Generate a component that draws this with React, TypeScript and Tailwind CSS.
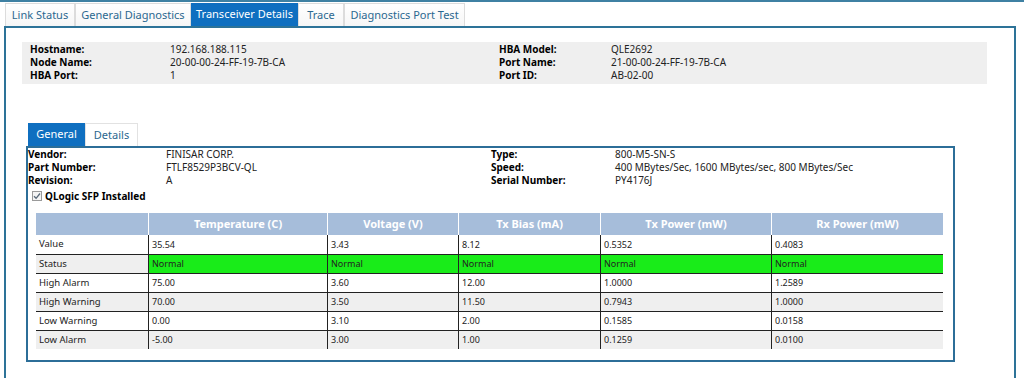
import React from "react";

const outerTabs = [
  { label: "Link Status", w: "w-[70px]", active: false },
  { label: "General Diagnostics", w: "w-[116px]", active: false },
  { label: "Transceiver Details", w: "w-[107px]", active: true },
  { label: "Trace", w: "w-[46px]", active: false },
  { label: "Diagnostics Port Test", w: "w-[121px]", active: false },
];

const cols = ["", "Temperature (C)", "Voltage (V)", "Tx Bias (mA)", "Tx Power (mW)", "Rx Power (mW)"];

const rows: string[][] = [
  ["Value", "35.54", "3.43", "8.12", "0.5352", "0.4083"],
  ["Status", "Normal", "Normal", "Normal", "Normal", "Normal"],
  ["High Alarm", "75.00", "3.60", "12.00", "1.0000", "1.2589"],
  ["High Warning", "70.00", "3.50", "11.50", "0.7943", "1.0000"],
  ["Low Warning", "0.00", "3.10", "2.00", "0.1585", "0.0158"],
  ["Low Alarm", "-5.00", "3.00", "1.00", "0.1259", "0.0100"],
];

const colW = ["w-[112px]", "w-[179px]", "w-[131px]", "w-[142px]", "w-[171px]", "w-[172px]"];

export default function App() {
  return (
    <div className="w-[1024px] h-[378px] overflow-hidden bg-white flex flex-col font-['Noto_Sans',sans-serif] text-black">
      <div className="h-[2px] bg-[#3f81a3] shrink-0" />
      <div className="flex h-[24px] pl-[5px] pt-[1px] shrink-0">
        {outerTabs.map((t) => (
          <div
            key={t.label}
            className={
              t.active
                ? `${t.w} h-[23px] flex items-center justify-center bg-[#0f6fc0] text-white text-[11px]`
                : `${t.w} h-[23px] flex items-center justify-center bg-gradient-to-b from-white to-[#f6f6f6] border-x border-t border-[#dcdcdc] text-[#2b6890] text-[11px]`
            }
          >
            {t.label}
          </div>
        ))}
      </div>
      <div className="ml-[4px] w-[1012px] flex-1 border-2 border-b-0 border-[#2d7398] pt-[14px] pl-[16px]">
        {/* Host info box */}
        <div className="w-[965px] h-[42px] bg-[#efefef] pt-[1px] pl-[8px] text-[10px] leading-[13px]">
          {[
            ["Hostname:", "192.168.188.115", "HBA Model:", "QLE2692"],
            ["Node Name:", "20-00-00-24-FF-19-7B-CA", "Port Name:", "21-00-00-24-FF-19-7B-CA"],
            ["HBA Port:", "1", "Port ID:", "AB-02-00"],
          ].map((r) => (
            <div key={r[0]} className="flex h-[13px]">
              <div className="w-[140px] font-bold">{r[0]}</div>
              <div className="w-[329px] text-[#222]">{r[1]}</div>
              <div className="w-[112px] font-bold">{r[2]}</div>
              <div className="text-[#222]">{r[3]}</div>
            </div>
          ))}
        </div>

        {/* Inner section */}
        <div className="mt-[39px] ml-[4px]">
          <div className="flex h-[23px] pl-[2px]">
            <div className="w-[57px] h-[23px] flex items-center justify-center bg-[#0f6fc0] text-white text-[11px]">
              General
            </div>
            <div className="w-[53px] h-[23px] flex items-center justify-center bg-white border-x border-t border-[#e2e2e2] text-[#2b6890] text-[11px]">
              Details
            </div>
          </div>
          <div className="w-[929px] h-[216px] border-2 border-[#2c6e98]">
            <div className="text-[10px] leading-[13px]">
              {[
                ["Vendor:", "FINISAR CORP.", "Type:", "800-M5-SN-S"],
                ["Part Number:", "FTLF8529P3BCV-QL", "Speed:", "400 MBytes/Sec, 1600 MBytes/sec, 800 MBytes/Sec"],
                ["Revision:", "A", "Serial Number:", "PY4176J"],
              ].map((r) => (
                <div key={r[0]} className="flex h-[13px]">
                  <div className="w-[138px] font-bold">{r[0]}</div>
                  <div className="w-[325px] text-[#222]">{r[1]}</div>
                  <div className="w-[124px] font-bold">{r[2]}</div>
                  <div className="text-[#222]">{r[3]}</div>
                </div>
              ))}
              <div className="flex items-center h-[14px] mt-[2px] pl-[4px]">
                <div className="w-[10px] h-[10px] border border-[#9a9a9a] bg-[#f4f4f4] flex items-center justify-center">
                  <svg width="8" height="8" viewBox="0 0 8 8">
                    <path d="M1 4.2 L3.1 6.3 L7 1.5" fill="none" stroke="#5a6a7a" strokeWidth="1.3" />
                  </svg>
                </div>
                <div className="ml-[3px] font-bold">QLogic SFP Installed</div>
              </div>
            </div>

            {/* Table */}
            <div className="mt-[10px] ml-[8px] w-[907px]">
              <div className="flex h-[22px] bg-[#a6bdda]">
                {cols.map((c, i) => (
                  <div
                    key={i}
                    className={`${colW[i]} h-[22px] flex items-center justify-center text-white font-bold text-[11px] ${
                      i > 0 ? "border-l border-white" : ""
                    }`}
                  >
                    {c}
                  </div>
                ))}
              </div>
              {rows.map((r, ri) => {
                const grey = ri % 2 === 1;
                return (
                  <div
                    key={r[0]}
                    className={`flex h-[19px] ${ri > 0 ? "border-t border-[#222]" : ""} ${grey ? "bg-[#efefef]" : "bg-white"}`}
                  >
                    {r.map((v, ci) => (
                      <div
                        key={ci}
                        className={`${colW[ci]} h-full flex items-center pl-[3px] ${
                          ci > 0 ? "border-l border-[#222] text-[9px] text-[#222]" : "text-[9.5px] text-[#222]"
                        } ${ri === 1 && ci > 0 ? "bg-[#19ec19]" : ""}`}
                      >
                        {v}
                      </div>
                    ))}
                  </div>
                );
              })}
            </div>
          </div>
        </div>
      </div>
    </div>
  );
}
